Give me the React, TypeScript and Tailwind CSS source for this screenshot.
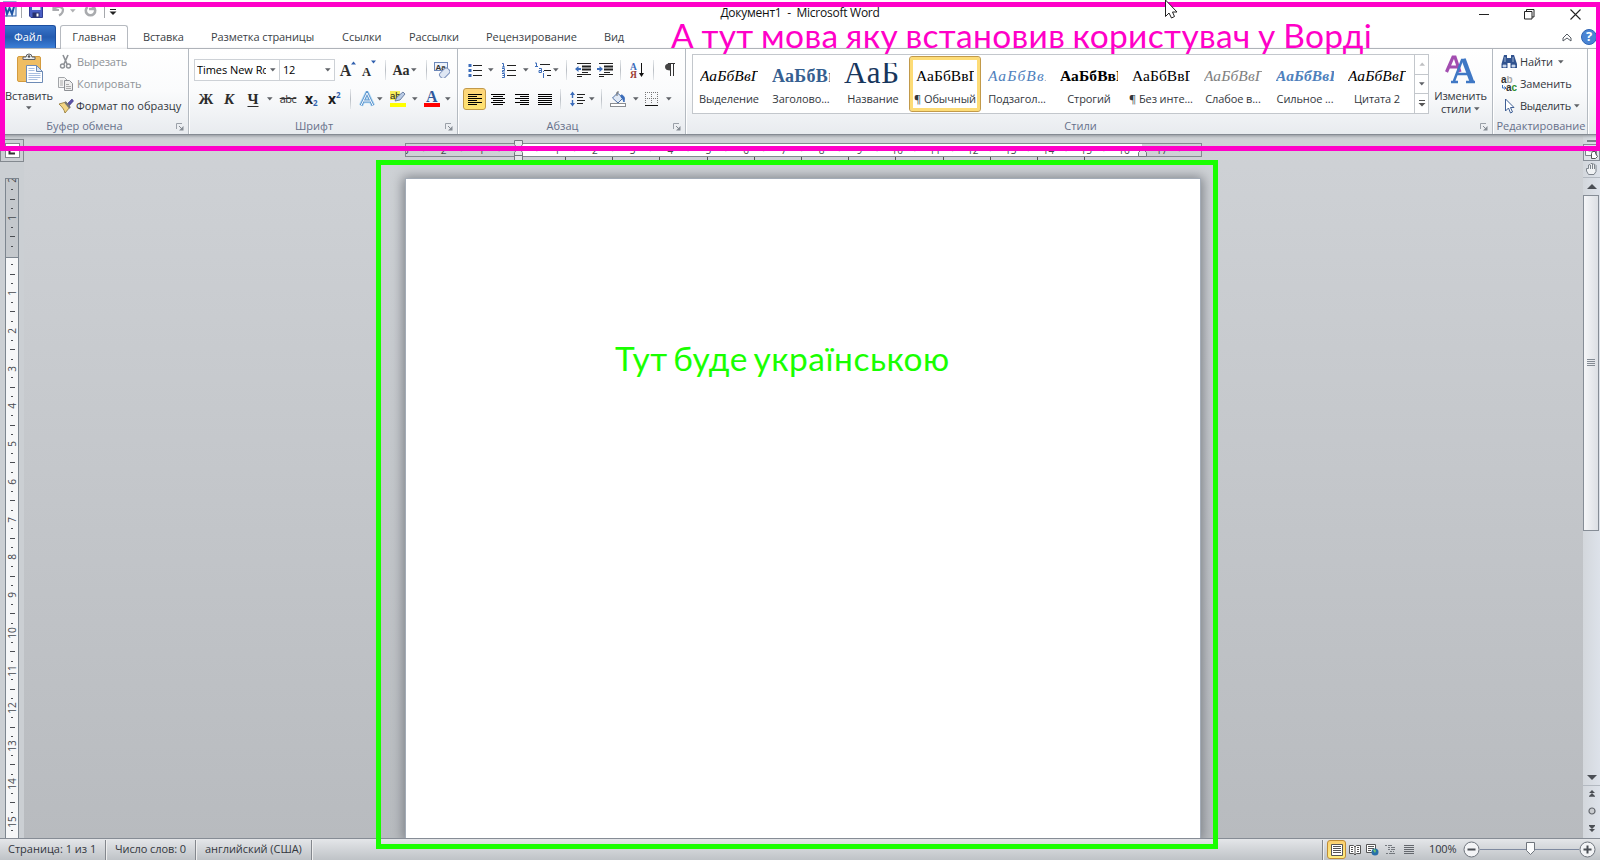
import React from 'react';

const Arrow = ({ className = '' }: { className?: string }) => (
  <svg className={`h-[4px] w-[6px] shrink-0 ${className}`} viewBox="0 0 6 4">
    <path d="M0 .3H5.6L2.8 3.6z" fill="#5f6267" />
  </svg>
);

const Sep = ({ className = '' }: { className?: string }) => (
  <div className={`h-[20px] w-px shrink-0 bg-gradient-to-b from-[#e6e9ec] via-[#b9bec4] to-[#e6e9ec] ${className}`} />
);

const Svg = ({ w = 16, h = 16, className = '', children }: { w?: number; h?: number; className?: string; children: React.ReactNode }) => (
  <svg width={w} height={h} viewBox={`0 0 ${w} ${h}`} className={`shrink-0 ${className}`}>
    {children}
  </svg>
);

const Launcher = () => (
  <Svg w={8} h={8}>
    <path d="M.5 6V.5H6" fill="none" stroke="#9aa0a8" />
    <path d="M3 3l3.5 3.5" stroke="#858b93" />
    <path d="M7.5 3v4.5H3z" fill="#858b93" />
  </Svg>
);

function Lines({ rows, className = '' }: { rows: number[][]; className?: string }) {
  return (
    <Svg w={14} h={13} className={className}>
      {rows.map(([x, w], i) => (
        <rect key={i} x={x} y={i * 2 + 1} width={w} height="1" fill="#000" />
      ))}
    </Svg>
  );
}

function Group({ label, className, launcher = true, labelClass = '', children }: { label: string; className: string; launcher?: boolean; labelClass?: string; children: React.ReactNode }) {
  return (
    <section className={`flex shrink-0 flex-col border-r border-[#b4bac1] shadow-[1px_0_0_#fff] ${className}`}>
      <div className="h-[68px]">{children}</div>
      <div className="flex h-[17px] items-center pt-[2px]">
        <span className={`flex-1 text-center text-[#66708a] ${labelClass}`}>{label}</span>
        {launcher && (
          <span className="mr-[4px]">
            <Launcher />
          </span>
        )}
      </div>
    </section>
  );
}

function TitleBar() {
  return (
    <header className="flex h-[25px] items-start bg-white">
      <div className="flex h-[25px] w-[200px] shrink-0 items-start pl-[3px]">
        <Svg w={14} h={17}>
          <rect x=".5" y="2" width="12.5" height="14" fill="#e5effb" stroke="#2b5ea8" />
          <path d="M2 6l2 8 2.500-6L9 14l2.200-8" fill="none" stroke="#1f55a5" strokeWidth="2" />
        </Svg>
        <div className="ml-[4px] mt-[5px] h-[13px] w-px bg-[#a5a8ac]" />
        <Svg w={15} h={18} className="ml-[7px]">
          <path d="M.5 4h13v13.500H2L.5 16z" fill="#4a5fc4" stroke="#2f3d92" />
          <rect x="3" y="4" width="8.500" height="6" fill="#eef2fb" />
          <rect x="3.500" y="12.500" width="7" height="5" fill="#27316e" />
          <rect x="7.500" y="13.500" width="2" height="3" fill="#fff" />
        </Svg>
        <Svg w={14} h={17} className="ml-[8px]">
          <path d="M1.500 4v6H7M2 9.500c3-4 8-3 9 0 0 3-2 5-4 6" fill="none" stroke="#a9abae" strokeWidth="2.200" />
        </Svg>
        <Arrow className="ml-[4px] mt-[9px] opacity-50" />
        <Svg w={14} h={17} className="ml-[8px]">
          <path d="M3.500 7a4.700 4.700 0 1 0 6 0M9 4v5h-4" fill="none" stroke="#a9abae" strokeWidth="2.600" />
        </Svg>
        <div className="ml-[6px] mt-[5px] h-[13px] w-px bg-[#a5a8ac]" />
        <Svg w={8} h={16} className="ml-[4px]">
          <path d="M1 9.500h6" stroke="#222" />
          <path d="M.5 11.500h7L4 15z" fill="#222" />
        </Svg>
      </div>
      <div className="flex h-[25px] flex-1 items-center justify-center whitespace-pre text-[12px] tracking-[-0.25px] text-[#111]">
        Документ1  -  Microsoft Word
      </div>
      <div className="flex h-[25px] w-[200px] shrink-0 items-center pl-[79px] pt-[3px]">
        <Svg w={10} h={11}><path d="M0 5.500h10" stroke="#222" /></Svg>
        <Svg w={11} h={11} className="ml-[35px]">
          <path d="M.5 2.500h7.500v7.500H.5zM2.500 2.500V.5h7.500V8H8" fill="none" stroke="#222" />
        </Svg>
        <Svg w={11} h={11} className="ml-[35px]"><path d="M.5.5l10 10M10.500.5l-10 10" stroke="#222" strokeWidth="1.100" /></Svg>
      </div>
    </header>
  );
}

function Tabs() {
  return (
    <nav className="flex h-[24px] items-stretch border-b border-[#b6bac0] bg-white text-[#3b3f46]">
      <div className="flex w-[56px] items-center justify-center rounded-tr-[3px] border border-b-0 border-[#1c4f9f] bg-gradient-to-b from-[#3a76ca] via-[#245cb0] to-[#3b7fd8] text-white">Файл</div>
      <div className="relative -mb-px ml-[4px] flex w-[68px] items-center justify-center rounded-t-[3px] border border-b-0 border-[#b6bac0] bg-white">Главная</div>
      <span className="ml-[15px] w-[40px] pt-[4px] text-center whitespace-nowrap tracking-[-0.15px]">Вставка</span>
      <span className="ml-[28px] w-[103px] pt-[4px] whitespace-nowrap tracking-[-0.1px]">Разметка страницы</span>
      <span className="ml-[28px] w-[39px] pt-[4px] whitespace-nowrap">Ссылки</span>
      <span className="ml-[28px] w-[50px] pt-[4px] whitespace-nowrap tracking-[-0.1px]">Рассылки</span>
      <span className="ml-[27px] w-[91px] pt-[4px] whitespace-nowrap">Рецензирование</span>
      <span className="ml-[27px] pt-[4px] whitespace-nowrap tracking-[-0.2px]">Вид</span>
      <div className="ml-auto flex items-center">
        <Svg w={10} h={9} className="mt-[2px]">
          <path d="M1 5l4-4 4 4v3L5 5 1 8z" fill="#fff" stroke="#555b63" />
        </Svg>
        <div className="ml-[9px] flex h-[16px] w-[16px] items-center justify-center rounded-full border border-[#2f65b4] bg-[#4a84d4] text-[13px] font-bold text-white">?</div>
        <div className="w-[3px]" />
      </div>
    </nav>
  );
}

function Clipboard() {
  return (
    <div className="flex h-full pt-[3px]">
      <div className="flex w-[53px] shrink-0 flex-col items-center pl-[5px]">
        <Svg w={28} h={32} className="mr-[-1px]">
          <rect x="1.500" y="4.500" width="23" height="25" rx="1.500" fill="#efbd62" stroke="#d39b3f" />
          <path d="M7 7.500V5h3a3 3 0 0 1 6 0h3v2.500z" fill="#e8ebef" stroke="#5c6066" />
          <circle cx="13" cy="4.500" r="1.200" fill="#555" />
          <path d="M10.500 13.500h10l6 6v11h-16z" fill="#fff" stroke="#6d8bb6" />
          <path d="M20.500 13.500v6h6z" fill="#dbe6f4" stroke="#6d8bb6" />
          <path d="M12.500 16.500h6M12.500 18.500h6M12.500 21.500h12M12.500 23.500h12M12.500 25.500h12M12.500 27.500h9" stroke="#a9bfe0" />
        </Svg>
        <span className="mt-[4px] leading-[16px] whitespace-nowrap tracking-[-0.1px] text-[#33373d]">Вставить</span>
        <Arrow className="mt-[2px]" />
      </div>
      <div className="flex flex-col pl-[5px]">
        <div className="flex h-[20px] items-center text-[#8f9398]">
          <Svg><path d="M5 1l4 9M10 1L6 10" stroke="#8d9095" strokeWidth="1.600" /><circle cx="4.500" cy="12" r="2" fill="none" stroke="#8d9095" strokeWidth="1.400" /><circle cx="10.500" cy="12" r="2" fill="none" stroke="#8d9095" strokeWidth="1.400" /></Svg>
          <span className="ml-[3px] tracking-[-0.2px]">Вырезать</span>
        </div>
        <div className="mt-[2px] flex h-[20px] items-center text-[#8f9398]">
          <Svg><path d="M.5 1.500h6l3 3v7h-9z" fill="#f4f4f4" stroke="#a2a5a9" /><path d="M6.500 4.500h5l3 3v7h-8z" fill="#eee" stroke="#8c8f94" /><path d="M2 5h3M2 7h3M2 9h3M8 8.500h3M8 10.500h5M8 12.500h5" stroke="#aaa" /></Svg>
          <span className="ml-[3px]">Копировать</span>
        </div>
        <div className="mt-[2px] flex h-[20px] items-center text-[#33373d]">
          <Svg w={17}><path d="M9 6l5-5 1.500 2L11 8z" fill="#5b52a8" stroke="#3f3b80" strokeWidth=".6" /><path d="M1 6l7-2 4 5-5 6c-1-4-3-6-6-9z" fill="#f3d583" stroke="#8f7430" strokeWidth=".8" /><path d="M7 4l5 6" stroke="#777" strokeWidth="2" /></Svg>
          <span className="ml-[1px] whitespace-nowrap tracking-[0.06px]">Формат по образцу</span>
        </div>
      </div>
    </div>
  );
}

const serifBtn = 'flex shrink-0 justify-center font-["Liberation_Serif",serif] font-bold leading-[18px] text-[#2c2c2c]';

function FontGroup() {
  return (
    <div className="pt-[10px]">
      <div className="flex h-[22px] items-center pl-[5px]">
        <div className="flex h-[22px] w-[86px] items-center border border-[#cdd1d6] bg-white pl-[2px] text-black">
          <span className="w-[69px] overflow-hidden whitespace-nowrap tracking-[-0.05px]">Times New Roman</span>
          <Arrow className="ml-[4px]" />
        </div>
        <div className="flex h-[22px] w-[55px] items-center border border-l-0 border-[#cdd1d6] bg-white pl-[3px] text-black">
          <span className="w-[41px] tracking-[-0.2px]">12</span>
          <Arrow className="ml-px" />
        </div>
        <div className={`ml-[5px] w-[16px] text-[16px] ${serifBtn}`}><span className="pt-[2px]">A</span><Svg w={5} h={4} className="mt-px"><path d="M0 3.500L2.500.5 5 3.500z" fill="#2f5fae" /></Svg></div>
        <div className={`ml-[5px] w-[16px] text-[12.5px] ${serifBtn}`}><span className="pt-[4px]">A</span><Svg w={5} h={4} className="mt-px"><path d="M0 .5h5L2.500 3.500z" fill="#2f5fae" /></Svg></div>
        <Sep className="ml-[8px]" />
        <div className={`ml-[7px] w-[16px] pt-[2px] text-[14px] ${serifBtn}`}>Aa</div>
        <Arrow className="ml-[2px]" />
        <Sep className="ml-[9px]" />
        <Svg className="ml-[7px]">
          <rect x=".5" y=".5" width="13" height="8" fill="#eef3fb" stroke="#6c87b8" />
          <text x="1.500" y="7.500" fontSize="8" fontWeight="700" fill="#333" fontFamily="Liberation Sans">Aa</text>
          <rect x="5" y="8" width="11" height="6.500" rx="2.500" transform="rotate(-45 10.500 11)" fill="#dfe7f4" stroke="#7d93bd" />
        </Svg>
      </div>
      <div className="mt-[7px] flex h-[22px] items-center pl-[10px]">
        <div className={`w-[14px] text-[15px] ${serifBtn}`}>Ж</div>
        <div className={`ml-[9px] w-[14px] text-[15px] italic ${serifBtn}`}>К</div>
        <div className={`ml-[11px] w-[12px] text-[15px] underline underline-offset-2 ${serifBtn}`}>Ч</div>
        <Arrow className="ml-[8px]" />
        <div className="ml-[6px] w-[18px] shrink-0 text-center text-[11px] tracking-[-0.5px] text-[#333] line-through">abc</div>
        <div className="ml-[8px] flex w-[14px] shrink-0 items-end text-[14px] font-bold leading-[16px] text-[#1c1c1c]">x<span className="text-[8px] leading-[8px] text-[#2f5fae]">2</span></div>
        <div className="ml-[9px] flex w-[14px] shrink-0 items-start text-[14px] font-bold leading-[16px] text-[#1c1c1c]">x<span className="text-[8px] leading-[8px] text-[#2f5fae]">2</span></div>
        <Sep className="ml-[8px]" />
        <Svg className="ml-[8px]">
          <path d="M2 14.500L8 2l6 12.500M4.500 10h7" fill="none" stroke="#b4dcf6" strokeWidth="4.500" strokeLinejoin="round" />
          <path d="M2 14.500L8 2l6 12.500M4.500 10h7" fill="none" stroke="#5a92cc" strokeWidth="2.800" />
          <path d="M2 14.500L8 2l6 12.500M4.500 10h7" fill="none" stroke="#fff" strokeWidth="1" />
        </Svg>
        <Arrow className="ml-[2px]" />
        <Svg className="ml-[7px]">
          <rect width="10" height="9" fill="#f7ef5a" />
          <text x="0" y="8" fontSize="9.500" fill="#222" fontFamily="Liberation Sans">ab</text>
          <path d="M5 10l2-4 6-5 2 2-5 6z" fill="#b9cbe6" stroke="#536a92" strokeWidth=".8" />
          <rect y="12" width="16" height="4" fill="#ff0" />
        </Svg>
        <Arrow className="ml-[6px]" />
        <Svg className="ml-[6px]">
          <text x="2" y="11" fontSize="16" fontWeight="700" fill="#30599c" fontFamily="Liberation Serif">A</text>
          <rect y="12" width="16" height="4" fill="#f00" />
        </Svg>
        <Arrow className="ml-[5px]" />
      </div>
    </div>
  );
}

const full = [0, 14];

function Paragraph() {
  return (
    <div className="pt-[10px]">
      <div className="flex h-[22px] items-center pl-[9px]">
        <Svg><path d="M6 3.500h9M6 8.500h9M6 13.500h9" stroke="#222" /><path d="M1.500 2h3v3h-3zM1.500 7h3v3h-3zM1.500 12h3v3h-3z" fill="#3b6cba" /></Svg>
        <Arrow className="ml-[5px]" />
        <Svg className="ml-[7px]">
          <path d="M6 3.500h9M6 8.500h9M6 13.500h9" stroke="#222" />
          <path d="M1 1.500h1.500V5M1 5h3M1 6.500h2.500v2H1.500v1.500h2.500M1 11.500h2.500v4H1M1.500 13.500h2" stroke="#3b6cba" fill="none" />
        </Svg>
        <Arrow className="ml-[6px]" />
        <Svg w={18} className="ml-[5px]">
          <path d="M6 2.500h10M10 8.500h7M13 13.500h4" stroke="#222" />
          <path d="M1 1h1.500v4M1 4.500h3M5 6.500h2.500v4H5v-2h2M9.500 11v5M9.500 9v1" stroke="#3b6cba" fill="none" />
        </Svg>
        <Arrow className="ml-[1px]" />
        <Sep className="ml-[7px]" />
        <Svg className="ml-[8px]">
          <path d="M2 1.500h14M7 10.500h6M2 12.500h14M2 14.500h5" stroke="#222" /><path d="M7 4.500h9M7 7.500h9" stroke="#222" strokeWidth="2" />
          <path d="M0 7l3.500-3v2H6v2H3.500v2z" fill="#3b6cba" />
        </Svg>
        <Svg className="ml-[6px]">
          <path d="M2 1.500h14M7 10.500h6M2 12.500h14M2 14.500h5" stroke="#222" /><path d="M7 4.500h9M7 7.500h9" stroke="#222" strokeWidth="2" />
          <path d="M6 7L2.500 4v2H0v2h2.500v2z" fill="#3b6cba" />
        </Svg>
        <Sep className="ml-[7px]" />
        <Svg className="ml-[9px]">
          <text x="0" y="7.500" fontSize="9.500" fontWeight="700" fill="#3b6cba" fontFamily="Liberation Serif">А</text>
          <text x="0" y="15.500" fontSize="9.500" fontWeight="700" fill="#9c3b34" fontFamily="Liberation Serif">Я</text>
          <path d="M11.500 1v12" stroke="#111" /><path d="M9 11h5l-2.500 4z" fill="#111" />
        </Svg>
        <Sep className="ml-[7px]" />
        <Svg w={12} className="ml-[10px]">
          <path d="M6.500 2v12M9.500 2v12M4 1.500h7" stroke="#333" fill="none" /><path d="M6.500 1.500C3 1 1 2.500 1 5s2 3.500 5.500 3.500z" fill="#444" />
        </Svg>
      </div>
      <div className="mt-[7px] flex h-[22px] items-center pl-[5px]">
        <div className="flex h-[22px] w-[23px] items-center justify-center rounded-[3px] border border-[#c29a4a] bg-gradient-to-b from-[#fcd47a] to-[#ffe36f]">
          <Lines rows={[full, [0, 9], full, [0, 9], full, [0, 9]]} />
        </div>
        <Lines className="ml-[5px]" rows={[full, [2, 10], full, [2, 10], full, [2, 10]]} />
        <Lines className="ml-[10px]" rows={[full, [5, 9], full, [5, 9], full, [5, 9]]} />
        <Lines className="ml-[9px]" rows={[full, full, full, full, full, full]} />
        <Sep className="ml-[8px]" />
        <Svg className="ml-[9px]">
          <path d="M7 3.500h8M7 6.500h6M7 9.500h8M7 12.500h6" stroke="#222" />
          <path d="M0 4l2.500-3.500L5 4H3.200v3H1.800V4zM0 12l2.500 3.500L5 12H3.200V9H1.800v3z" fill="#3b6cba" />
        </Svg>
        <Arrow className="ml-[3px]" />
        <Sep className="ml-[6px]" />
        <Svg w={17} className="ml-[8px]">
          <path d="M2.500 7l5-5 5.500 5-5 5z" fill="#dfe8f5" stroke="#4f6fa4" /><path d="M7 5V1h2" fill="none" stroke="#666" /><path d="M11 4c3 0 4 3 3 7-1-2-1-3-3-5z" fill="#3b6cba" stroke="#3b6cba" />
          <rect x=".5" y="12.500" width="15" height="3" fill="#fff" stroke="#8a8d92" />
        </Svg>
        <Arrow className="ml-[6px]" />
        <Svg w={14} className="ml-[6px]">
          <path d="M.5 1v12M6.500 1v12M12.500 1v12M0 1.500h13M0 7.500h13" stroke="#777" strokeDasharray="1 1" /><path d="M0 14.500h13" stroke="#111" />
        </Svg>
        <Arrow className="ml-[7px]" />
      </div>
    </div>
  );
}

const styleItems = [
  { name: 'Выделение', sample: 'АаБбВвГ', cls: 'text-[15.5px] leading-[34px] italic tracking-[0.1px] text-black' },
  { name: 'Заголово...', sample: 'АаБбВв', cls: 'text-[18px] leading-[35px] font-bold tracking-[0.3px] text-[#365f91]' },
  { name: 'Название', sample: 'АаБ', cls: 'text-[31px] leading-[27px] tracking-[0.8px] text-[#17365d]' },
  { name: '¶ Обычный', sample: 'АаБбВвГ', cls: 'text-[15.5px] leading-[34px] tracking-[0.05px] text-black', active: true },
  { name: 'Подзагол...', sample: 'АаБбВвГ', cls: 'text-[15.5px] leading-[34px] italic tracking-[1.1px] text-[#4f81bd]' },
  { name: 'Строгий', sample: 'АаБбВвГ', cls: 'text-[15.5px] leading-[34px] font-bold tracking-[0.1px] text-black' },
  { name: '¶ Без инте...', sample: 'АаБбВвГ', cls: 'text-[15.5px] leading-[34px] tracking-[0.05px] text-black' },
  { name: 'Слабое в...', sample: 'АаБбВвГ', cls: 'text-[15.5px] leading-[34px] italic tracking-[0.1px] text-[#808080]' },
  { name: 'Сильное ...', sample: 'АаБбВвГ', cls: 'text-[15.5px] leading-[34px] font-bold italic tracking-[0.1px] text-[#4f81bd]' },
  { name: 'Цитата 2', sample: 'АаБбВвГ', cls: 'text-[15.5px] leading-[34px] italic tracking-[0.1px] text-black' },
];

function Styles() {
  return (
    <div className="flex pl-[6px] pt-[5px]">
      <div className="flex h-[60px] w-[737px] border border-[#c3c7cc] bg-white">
        {styleItems.map((s) => (
          <div key={s.name} className={`mt-px flex h-[56px] w-[72px] shrink-0 flex-col items-center ${s.active ? 'rounded-[3px] border border-[#c29a4a] shadow-[inset_0_0_0_3px_#fddc77]' : 'border border-transparent'}`}>
            <div className="mt-[6px] h-[24px] w-[58px] overflow-hidden whitespace-nowrap">
              <div className={`-mt-[4px] font-["Liberation_Serif",serif] ${s.cls}`}>{s.sample}</div>
            </div>
            <div className="mt-[4px] leading-[16px] whitespace-nowrap tracking-[-0.1px] text-[#33373d]">{s.name}</div>
          </div>
        ))}
        <div className="ml-[1px] flex flex-1 flex-col border-l border-[#c3c7cc]">
          <div className="flex flex-1 items-center justify-center"><Arrow className="rotate-180 opacity-40" /></div>
          <div className="flex flex-1 items-center justify-center border-y border-[#c3c7cc]"><Arrow /></div>
          <div className="flex flex-1 items-center justify-center"><Svg w={8} h={7}><path d="M1 .5h6" stroke="#555" /><path d="M.5 3h7L4 6.500z" fill="#555" /></Svg></div>
        </div>
      </div>
      <div className="flex w-[63px] flex-col items-center">
        <Svg w={31} h={31}>
          <path d="M1.500 18L8 3h2l5 15M4.500 13h9" fill="none" stroke="#a24db0" strokeWidth="3.200" />
          <path d="M9 27L17 6h3M12 20h12M6 28h7M21 28h9" fill="none" stroke="#3f78c5" strokeWidth="2.500" />
          <path d="M18.500 5L27 28" stroke="#3f78c5" strokeWidth="4.500" />
        </Svg>
        <span className="mt-[4px] leading-[13px] tracking-[-0.1px] text-[#33373d]">Изменить</span>
        <span className="flex items-center leading-[13px] tracking-[-0.1px] text-[#33373d]">стили<Arrow className="ml-[3px]" /></span>
      </div>
    </div>
  );
}

function Editing() {
  return (
    <div className="flex flex-col pl-[8px] pt-[3px] text-[#33373d]">
      <div className="flex h-[20px] items-center">
        <Svg><path d="M3 1h3v3h4V1h3l3 9v4H9.500V9h-3v5H.5v-4z" fill="#31538f" /><path d="M2 11h3v2H2zM11 11h3v2h-3zM4 3v5M12 3v5" fill="#c8d6ec" stroke="#c8d6ec" strokeWidth=".7" /></Svg>
        <span className="ml-[3px] tracking-[-0.1px]">Найти</span><Arrow className="ml-[5px]" />
      </div>
      <div className="mt-[2px] flex h-[20px] items-center">
        <Svg>
          <text x="0" y="7" fontSize="10" fill="#333" fontFamily="Liberation Sans" fontWeight="700">a<tspan fill="#aaa">b</tspan></text>
          <text x="5" y="15" fontSize="10" fontWeight="700" fill="#333" fontFamily="Liberation Sans">a<tspan fill="#2f8f2f">c</tspan></text>
          <path d="M1.500 9v3H5M3.500 10.500L5 12l-1.500 1.500" fill="none" stroke="#3b6cba" />
        </Svg>
        <span className="ml-[3px] tracking-[-0.1px]">Заменить</span>
      </div>
      <div className="mt-[2px] flex h-[20px] items-center">
        <Svg><path d="M4.500 1v12l3-3 2 5 2-1-2-4.500h3.500z" fill="#fff" stroke="#3f5f95" /></Svg>
        <span className="ml-[3px] tracking-[-0.25px]">Выделить</span><Arrow className="ml-[3px]" />
      </div>
    </div>
  );
}

function Ribbon() {
  return (
    <div className="relative flex h-[86px] shrink-0 border-b border-[#858b93] bg-gradient-to-b from-white via-[#fafbfc] to-[#e8ebef] shadow-[0_1px_3px_#8d9299]">
      <Group label="Буфер обмена" className="w-[189px]" labelClass="pr-[7px]"><Clipboard /></Group>
      <Group label="Шрифт" className="w-[269px]" labelClass="pr-[6px]"><FontGroup /></Group>
      <Group label="Абзац" className="w-[228px]" labelClass="pr-[6px]"><Paragraph /></Group>
      <Group label="Стили" className="w-[807px]" labelClass="pr-[5px]"><Styles /></Group>
      <Group label="Редактирование" className="w-[95px]" launcher={false} labelClass="pl-[2px]"><Editing /></Group>
    </div>
  );
}

const Dot = () => <div className="flex h-[9.45px] items-center justify-center"><i className="h-px w-[2px] bg-[#4a4d52]" /></div>;
const Dash = () => <div className="flex h-[9.45px] items-center justify-center"><i className="h-px w-[5px] bg-[#4a4d52]" /></div>;

function VNumber({ n }: { n: number }) {
  return (
    <div className="flex h-[9.45px] items-center justify-center text-[10px] leading-[9px] text-[#45484e]">
      <span className="-rotate-90 pt-px">{n}</span>
    </div>
  );
}

function VerticalRuler() {
  return (
    <div className="flex w-[24px] shrink-0 flex-col overflow-hidden bg-[#cbcfd3]">
      <div className="mt-[4px] flex h-[23px] shrink-0 items-center justify-center border border-[#83898f]">
        <div className="flex h-[15px] w-[15px] items-center justify-center border border-[#83898f] bg-white">
          <Svg w={8} h={8}><path d="M1.500 0v6.500H7" fill="none" stroke="#333" strokeWidth="2" /></Svg>
        </div>
      </div>
      <div className="ml-[5px] mt-[16px] h-[80px] w-[14px] shrink-0 overflow-hidden border border-[#7d868f] bg-[#c4c8cc]">
        <div className="-mt-[3.5px]"><VNumber n={2} /><Dot /><Dash /><Dot /><VNumber n={1} /><Dot /><Dash /><Dot /></div>
      </div>
      <div className="ml-[5px] w-[14px] flex-1 overflow-hidden border-x border-[#7d868f] bg-[#f6f7f8] pt-[2px]">
        {Array.from({ length: 16 }, (_, i) => (
          <div key={i}>
            <Dot /><Dash /><Dot /><VNumber n={i + 1} />
          </div>
        ))}
      </div>
    </div>
  );
}

function HorizontalRuler() {
  const numbers = ['3', '2', '1', '', ...Array.from({ length: 17 }, (_, i) => String(i + 1))];
  return (
    <div className="relative flex w-[797px] flex-col">
      <div className="flex h-[14px] overflow-hidden border border-[#83898f] bg-[linear-gradient(to_right,transparent_112px,#fff_112px,#fff_736px,transparent_736px)]">
        <div className="-ml-[19px] flex">
          {numbers.map((n, i) => (
            <span key={i} className="flex w-[37.8px] shrink-0 items-center text-[10px] leading-[10px] text-[#45484e]">
              <span className="w-[9.5px]" /><span className="flex-1 text-center">{n}</span><span className="w-[9.5px] text-right">·</span>
            </span>
          ))}
        </div>
      </div>
      <div className="flex h-[3px] pl-[160px]">
        {Array.from({ length: 12 }, (_, i) => <i key={i} className="w-[47.2px] shrink-0 border-l border-[#555]" />)}
      </div>
      <svg className="absolute left-[109px] top-[-3px]" width="9" height="22" viewBox="0 0 9 22">
        <path d="M.5.5h8v4l-3 4 3 4v8h-8v-8l3-4-3-4zM0 15.500h9" fill="#e4e6e8" stroke="#73787e" />
      </svg>
      <svg className="absolute left-[733px] top-[5px]" width="9" height="9" viewBox="0 0 9 9">
        <path d="M.5 8.500V4.500l4-4 4 4v4z" fill="#e4e6e8" stroke="#73787e" />
      </svg>
    </div>
  );
}

function ScrollBar() {
  return (
    <div className="flex w-[17px] shrink-0 flex-col items-center bg-gradient-to-r from-[#d3d7dc] to-[#dde2ea] pt-[5px]">
      <div className="ml-[4px] h-[2px] w-[13px] bg-[#7b8188]" />
      <div className="mt-[2px] flex h-[17px] w-[17px] items-center justify-center border border-[#868d96] bg-[#dfe3e8]">
        <Svg w={13} h={13}><path d="M.5.5h11v9H.5zM3.500 1v4M3.500 5h4" fill="#f7f8f9" stroke="#7c838b" /><path d="M7.500 5.500h3v2l2 3-2 2h-4v-5z" fill="#fff" stroke="#555" /></Svg>
      </div>
      <Svg w={14} h={14} className="mt-px">
        <path d="M3.500 12.500L1.500 9V6.500h2V3l1.500-.5L6 1.500h1.500l1 .5 1.500.5 1 1v6l-2 3z" fill="#f0f2f4" stroke="#7d848c" /><path d="M5.500 3v4M7.500 2v5M9.500 3v4" stroke="#7d848c" />
      </Svg>
      <div className="mt-[1px] h-px w-full bg-[#b3b9c1]" />
      <Svg w={10} h={5} className="mt-[6px]"><path d="M0 5L5 0l5 5z" fill="#4b4f55" /></Svg>
      <div className="mr-[1px] mt-[6px] flex h-[336px] w-[16px] items-center justify-center border border-[#868d96] bg-gradient-to-r from-[#f5f6f8] to-[#dcdfe4]">
        <Svg w={8} h={8}><path d="M0 .5h8M0 2.500h8M0 4.500h8M0 6.500h8" stroke="#838a93" /></Svg>
      </div>
      <div className="flex-1" />
      <Svg w={10} h={5}><path d="M0 0h10L5 5z" fill="#4b4f55" /></Svg>
      <div className="mt-[5px] h-px w-full bg-[#b3b9c1]" />
      <Svg w={6} h={7} className="mt-[4px]"><path d="M0 3l3-3 3 3zM0 6l3-3 3 3zM0 6h6v.8H0z" fill="#4b4f55" /></Svg>
      <Svg w={8} h={8} className="mt-[10px]"><circle cx="4" cy="4" r="3" fill="#c9ccd0" stroke="#63676d" strokeWidth="1.200" /></Svg>
      <Svg w={6} h={7} className="mb-[6px] mt-[10px]"><path d="M0 0h6v1H0zM0 1h6L3 4zM0 4h6L3 7z" fill="#4b4f55" /></Svg>
    </div>
  );
}

function StatusBar() {
  return (
    <footer className="flex h-[22px] shrink-0 items-center border-t border-[#868c95] bg-gradient-to-b from-[#e4e6e9] to-[#bfc3c7] text-[#33373d]">
      <span className="w-[97px] pl-[8px] whitespace-nowrap">Страница: 1 из 1</span>
      <div className="ml-[8px] h-[20px] w-px bg-[#83878d] shadow-[1px_0_0_#eee]" />
      <span className="w-[89px] pl-[9px] whitespace-nowrap tracking-[-0.1px]">Число слов: 0</span>
      <div className="h-[20px] w-px bg-[#83878d] shadow-[1px_0_0_#eee]" />
      <span className="w-[115px] pl-[9px] whitespace-nowrap tracking-[-0.05px]">английский (США)</span>
      <div className="h-[20px] w-px bg-[#83878d] shadow-[1px_0_0_#eee]" />
      <div className="flex-1" />
      <div className="h-[20px] w-px bg-[#83878d] shadow-[1px_0_0_#eee]" />
      <div className="ml-[4px] flex h-[19px] w-[19px] items-center justify-center rounded-[3px] border border-[#c08d35] bg-gradient-to-b from-[#fbd070] to-[#ffee80]">
        <Svg w={12} h={12}><path d="M.5.5h11v11H.5z" fill="#fff" stroke="#555" /><path d="M2 2.500h8M2 4.500h8M2 6.500h8M2 8.500h8" stroke="#555" /></Svg>
      </div>
      <Svg w={12} h={12} className="ml-[3px]"><path d="M.5 1.500h4L6 3l1.500-1.500h4v8h-4L6 11 4.500 9.500h-4zM6 3v8" fill="#fff" stroke="#555" /><path d="M2 3.500h2M2 5.500h2M2 7.500h2M8 3.500h2M8 5.500h2M8 7.500h2" stroke="#555" /></Svg>
      <Svg w={13} h={13} className="ml-[5px]"><path d="M.5 1.500h9v8h-9z" fill="#fff" stroke="#555" /><path d="M2 3.500h6M2 5.500h6M2 7.500h3" stroke="#555" /><circle cx="9" cy="9" r="3.500" fill="#276fa8" /><path d="M7 7l2-1 1 2-1 2z" fill="#6fc26d" /></Svg>
      <Svg w={11} h={11} className="ml-[6px]"><path d="M0 1.500h7M3 3.500h7M3 5.500h7M5 7.500h4M1 9.500h9" stroke="#74787e" strokeDasharray="2 1 6 0" /></Svg>
      <Svg w={11} h={11} className="ml-[8px]"><path d="M0 1.500h10M0 3.500h10M0 5.500h10M0 7.500h10M0 9.500h10" stroke="#63676d" /></Svg>
      <span className="ml-[14px] w-[27px] tracking-[-0.15px]">100%</span>
      <Svg w={17} h={17} className="ml-[7px]"><circle cx="8.500" cy="8.500" r="7.500" fill="#f3f4f6" stroke="#6f757d" /><path d="M4.500 8.500h8" stroke="#4b4f55" strokeWidth="2" /></Svg>
      <div className="h-px w-[46px] bg-[#7f8aa0]" />
      <Svg w={9} h={13} className="mt-[-3px]"><path d="M.5.500h8v8l-4 4-4-4z" fill="#fafbfc" stroke="#6f757d" /></Svg>
      <div className="h-px w-[44px] bg-[#7f8aa0]" />
      <Svg w={17} h={17}><circle cx="8.500" cy="8.500" r="7.500" fill="#f3f4f6" stroke="#6f757d" /><path d="M4.500 8.500h8M8.500 4.500v8" stroke="#4b4f55" strokeWidth="2" /></Svg>
      <div className="w-[4px]" />
    </footer>
  );
}

export default function App() {
  return (
    <div className='relative flex h-[860px] w-[1600px] flex-col overflow-hidden bg-white font-["Open_Sans","Noto_Sans",sans-serif] text-[11px]'>
      <TitleBar />
      <Tabs />
      <Ribbon />
      <main className="flex min-h-0 flex-1 bg-gradient-to-b from-[#cfd2d6] to-[#b8bbbf]">
        <VerticalRuler />
        <div className="flex flex-1 flex-col overflow-hidden pl-[381px] pt-[8px]">
          <HorizontalRuler />
          <div className="mt-[18px] w-[796px] flex-1 border border-b-0 border-[#a3abb6] bg-white shadow-[0_1px_11px_2px_#7c8187]" />
        </div>
        <ScrollBar />
      </main>
      <StatusBar />

      <div className="absolute left-0 top-[2px] h-[149px] w-[1601px] border-[5px] border-[#ff00c8]" />
      <div className="absolute left-[376px] top-[160px] h-[689px] w-[842px] border-[5px] border-[#19ff00]" />
      <div className='absolute left-[671px] top-[11px] whitespace-nowrap font-["Lato","Open_Sans",sans-serif] text-[33.5px] leading-[48px] tracking-[0.36px] text-[#ff00c8] [word-spacing:-1.5px]'>А тут мова яку встановив користувач у Ворді</div>
      <div className='absolute left-[615px] top-[334px] whitespace-nowrap font-["Lato","Open_Sans",sans-serif] text-[33.5px] leading-[48px] tracking-[0.5px] text-[#19ff00] [word-spacing:-3.5px]'>Тут буде українською</div>
      <svg className="absolute left-[1165px] top-0" width="14" height="20" viewBox="0 0 14 20">
        <path d="M.5-4V16.500l3.500-3.500 2.500 5 3-1.500L7.500 12h4.500L.5 0" fill="#fff" stroke="#222" />
      </svg>
    </div>
  );
}
